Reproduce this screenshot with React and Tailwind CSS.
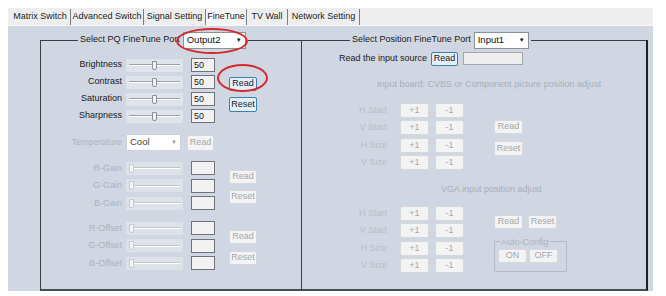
import React from "react";

const font = "font-['Liberation_Sans',Arial,sans-serif]";

const tabs = [
  { label: "Matrix Switch", w: "w-[61px]" },
  { label: "Advanced Switch", w: "w-[73px]" },
  { label: "Signal Setting", w: "w-[62px]" },
  { label: "FineTune", w: "w-[41px]", active: true },
  { label: "TV Wall", w: "w-[41px]" },
  { label: "Network Setting", w: "w-[72px]" },
];

function Btn({ children, kind = "off", className = "" }) {
  const look =
    kind === "blue"
      ? "border-[#3c7fb1] bg-[#e3f0fb] text-[#1a1a1a]"
      : kind === "on"
      ? "border-[#9a9a9a] bg-[#f1f1f1] text-[#1a1a1a]"
      : "border-[#d6d8dc] bg-[#f3f3f3] text-[#a4a7ad]";
  return (
    <div
      className={`flex items-center justify-center border rounded-[2px] text-[9px] leading-none ${look} ${className}`}
    >
      {children}
    </div>
  );
}

function Slider({ enabled }) {
  return (
    <div
      className={`flex items-center w-[57px] h-[13px] px-[3px] ${
        enabled ? "bg-[#dfe3ea]" : "bg-[#dde1e8]"
      }`}
    >
      {enabled ? (
        <>
          <div className="flex-1 h-[2px] border-t border-[#9aa0a8] border-b-white border-b" />
          <div className="w-[5px] h-[9px] border border-[#8c9096] bg-[#f3f3f3] rounded-b-[2px]" />
          <div className="flex-1 h-[2px] border-t border-[#9aa0a8] border-b-white border-b" />
        </>
      ) : (
        <>
          <div className="w-[5px] h-[9px] border border-[#c6c9ce] bg-[#f5f5f5] rounded-b-[2px]" />
          <div className="flex-1 h-[2px] border-t border-[#c2c6cc] border-b-white border-b" />
        </>
      )}
    </div>
  );
}

function Box({ value }) {
  return (
    <div className="w-[24px] h-[14px] ml-[8px] border border-[#6f7378] bg-[#f2f2f2] text-[9px] leading-[12px] pl-[2px] text-[#1a1a1a]">
      {value}
    </div>
  );
}

function SliderRow({ label, enabled, value, h = "h-[17px]" }) {
  return (
    <div className={`flex items-center ${h}`}>
      <span
        className={`w-[81px] text-right text-[9px] ${
          enabled ? "text-[#1a1a1a]" : "text-[#aeb4be]"
        }`}
      >
        {label}
      </span>
      <div className="ml-[4px]">
        <Slider enabled={enabled} />
      </div>
      <Box value={value} />
    </div>
  );
}

function PosRow({ label }) {
  return (
    <div className="flex items-center h-[17.5px]">
      <span className="w-[85px] text-right text-[9px] text-[#b9bec7]">{label}</span>
      <Btn className="ml-[13px] w-[29px] h-[15px]">+1</Btn>
      <Btn className="ml-[6px] w-[29px] h-[15px]">-1</Btn>
    </div>
  );
}

function Select({ value, w, disabled }) {
  return (
    <div
      className={`flex items-center justify-between ${w} h-[17px] border bg-white px-[3px] text-[9.5px] ${
        disabled ? "border-[#cfd2d6] text-[#444]" : "border-[#8d9299] text-[#111]"
      }`}
    >
      <span>{value}</span>
      <span className={`text-[6px] ${disabled ? "text-[#999]" : "text-[#111]"}`}>▼</span>
    </div>
  );
}

export default function App() {
  return (
    <div className={`relative w-[666px] h-[296px] bg-white pt-[8px] pl-[8px] ${font}`}>
      <div className="w-[645px]">
        {/* tab strip */}
        <div className="flex items-end h-[18px] bg-[#eeeeee] pl-[2px] border-b border-[#f8f8f8]">
          {tabs.map((t) => (
            <div
              key={t.label}
              className={`${t.w} h-[16px] flex items-center justify-center whitespace-nowrap border-r border-[#7d7d7d] text-[9px] ${
                t.active ? "bg-[#f7f7f7] text-[#222]" : "text-[#222]"
              }`}
            >
              {t.label}
            </div>
          ))}
        </div>

        {/* panel */}
        <div className="flex h-[265px] bg-[#d0d6e2] pl-[32px]">
          {/* PQ group */}
          <fieldset className="mt-[5.5px] w-[262px] h-[259.5px] border-l border-t border-r border-[#3a3d42] border-b-2 border-b-[#4a4d52]">
            <legend className="ml-[37px] px-[2px] flex items-center text-[9px] text-[#1a1a1a]">
              <span className="mr-[3px]">Select PQ FineTune Port</span>
              <Select value="Output2" w="w-[63px]" />
            </legend>

            <div className="flex mt-[8px]">
              <div className="flex flex-col">
                <SliderRow label="Brightness" enabled value="50" />
                <SliderRow label="Contrast" enabled value="50" />
                <SliderRow label="Saturation" enabled value="50" />
                <SliderRow label="Sharpness" enabled value="50" />
              </div>
              <div className="flex flex-col ml-[14px] pt-[20px] gap-[6px]">
                <Btn kind="blue" className="w-[28px] h-[14px]">Read</Btn>
                <Btn kind="blue" className="w-[28px] h-[15px]">Reset</Btn>
              </div>
            </div>

            <div className="flex items-center h-[17px] mt-[9.5px]">
              <span className="w-[81px] text-right text-[9px] text-[#aeb4be]">Temperature</span>
              <div className="ml-[4px]">
                <Select value="Cool" w="w-[55px]" disabled />
              </div>
              <Btn className="ml-[6px] w-[27px] h-[16px]">Read</Btn>
            </div>

            <div className="flex mt-[8.5px]">
              <div className="flex flex-col">
                <SliderRow label="R-Gain" h="h-[17.5px]" />
                <SliderRow label="G-Gain" h="h-[17.5px]" />
                <SliderRow label="B-Gain" h="h-[17.5px]" />
              </div>
              <div className="flex flex-col ml-[14px] pt-[10px] gap-[6px]">
                <Btn className="w-[28px] h-[14px]">Read</Btn>
                <Btn className="w-[28px] h-[14px]">Reset</Btn>
              </div>
            </div>

            <div className="flex mt-[7.5px]">
              <div className="flex flex-col">
                <SliderRow label="R-Offset" h="h-[17.5px]" />
                <SliderRow label="G-Offset" h="h-[17.5px]" />
                <SliderRow label="B-Offset" h="h-[17.5px]" />
              </div>
              <div className="flex flex-col ml-[14px] pt-[10px] gap-[7px]">
                <Btn className="w-[28px] h-[14px]">Read</Btn>
                <Btn className="w-[28px] h-[14px]">Reset</Btn>
              </div>
            </div>
          </fieldset>

          {/* position group */}
          <fieldset className="mt-[5.5px] w-[346px] h-[259.5px] border-t border-[#3a3d42] border-r-2 border-r-[#1e2024] border-b-2 border-b-[#4a4d52]">
            <legend className="ml-[48px] px-[2px] flex items-center text-[9px] text-[#1a1a1a]">
              <span className="mr-[3px]">Select Position FineTune Port</span>
              <Select value="Input1" w="w-[55px]" />
            </legend>

            <div className="flex items-center h-[14px] mt-[3px] pl-[37px]">
              <span className="text-[9px] text-[#1a1a1a]">Read the input source</span>
              <Btn kind="blue" className="ml-[4px] w-[27px] h-[14px]">Read</Btn>
              <div className="ml-[5px] w-[60px] h-[13px] border border-[#a3a7ad] bg-[#eeeeee]" />
            </div>

            <div className="mt-[12px] pl-[75px] h-[12px] text-[9px] leading-[12px] text-[#a9afba]">
              Input board: CVBS or Component picture position adjust
            </div>

            <div className="flex mt-[12px]">
              <div className="flex flex-col">
                <PosRow label="H Start" />
                <PosRow label="V Start" />
                <PosRow label="H Size" />
                <PosRow label="V Size" />
              </div>
              <div className="flex flex-col ml-[30px] pt-[18px] gap-[7px]">
                <Btn className="w-[29px] h-[14px]">Read</Btn>
                <Btn className="w-[29px] h-[15px]">Reset</Btn>
              </div>
            </div>

            <div className="mt-[11.5px] pl-[139px] h-[12px] text-[9px] leading-[12px] text-[#a9afba]">
              VGA input position adjust
            </div>

            <div className="flex mt-[9.5px]">
              <div className="flex flex-col">
                <PosRow label="H Start" />
                <PosRow label="V Start" />
                <PosRow label="H Size" />
                <PosRow label="V Size" />
              </div>
              <div className="flex flex-col ml-[30px] pt-[10px]">
                <div className="flex gap-[5px]">
                  <Btn className="w-[29px] h-[14px]">Read</Btn>
                  <Btn className="w-[29px] h-[14px]">Reset</Btn>
                </div>
                <fieldset className="mt-[8px] w-[73px] border border-[#b4b9c2] px-[3px] pb-[8px] rounded-[1px]">
                  <legend className="ml-[2px] px-[1px] text-[9px] leading-[10px] text-[#aeb4be]">
                    Auto-Config
                  </legend>
                  <div className="flex gap-[2px] mt-[2px]">
                    <Btn className="w-[29px] h-[14px]">ON</Btn>
                    <Btn className="w-[29px] h-[14px]">OFF</Btn>
                  </div>
                </fieldset>
              </div>
            </div>
          </fieldset>
        </div>
      </div>

      {/* red annotation rings */}
      <div className="absolute left-[176px] top-[28px] w-[72px] h-[26px] rounded-[50%] border-2 border-[#d42a2a]" />
      <div className="absolute left-[217px] top-[64px] w-[51px] h-[28px] rounded-[50%] border-2 border-[#d42a2a]" />
    </div>
  );
}
